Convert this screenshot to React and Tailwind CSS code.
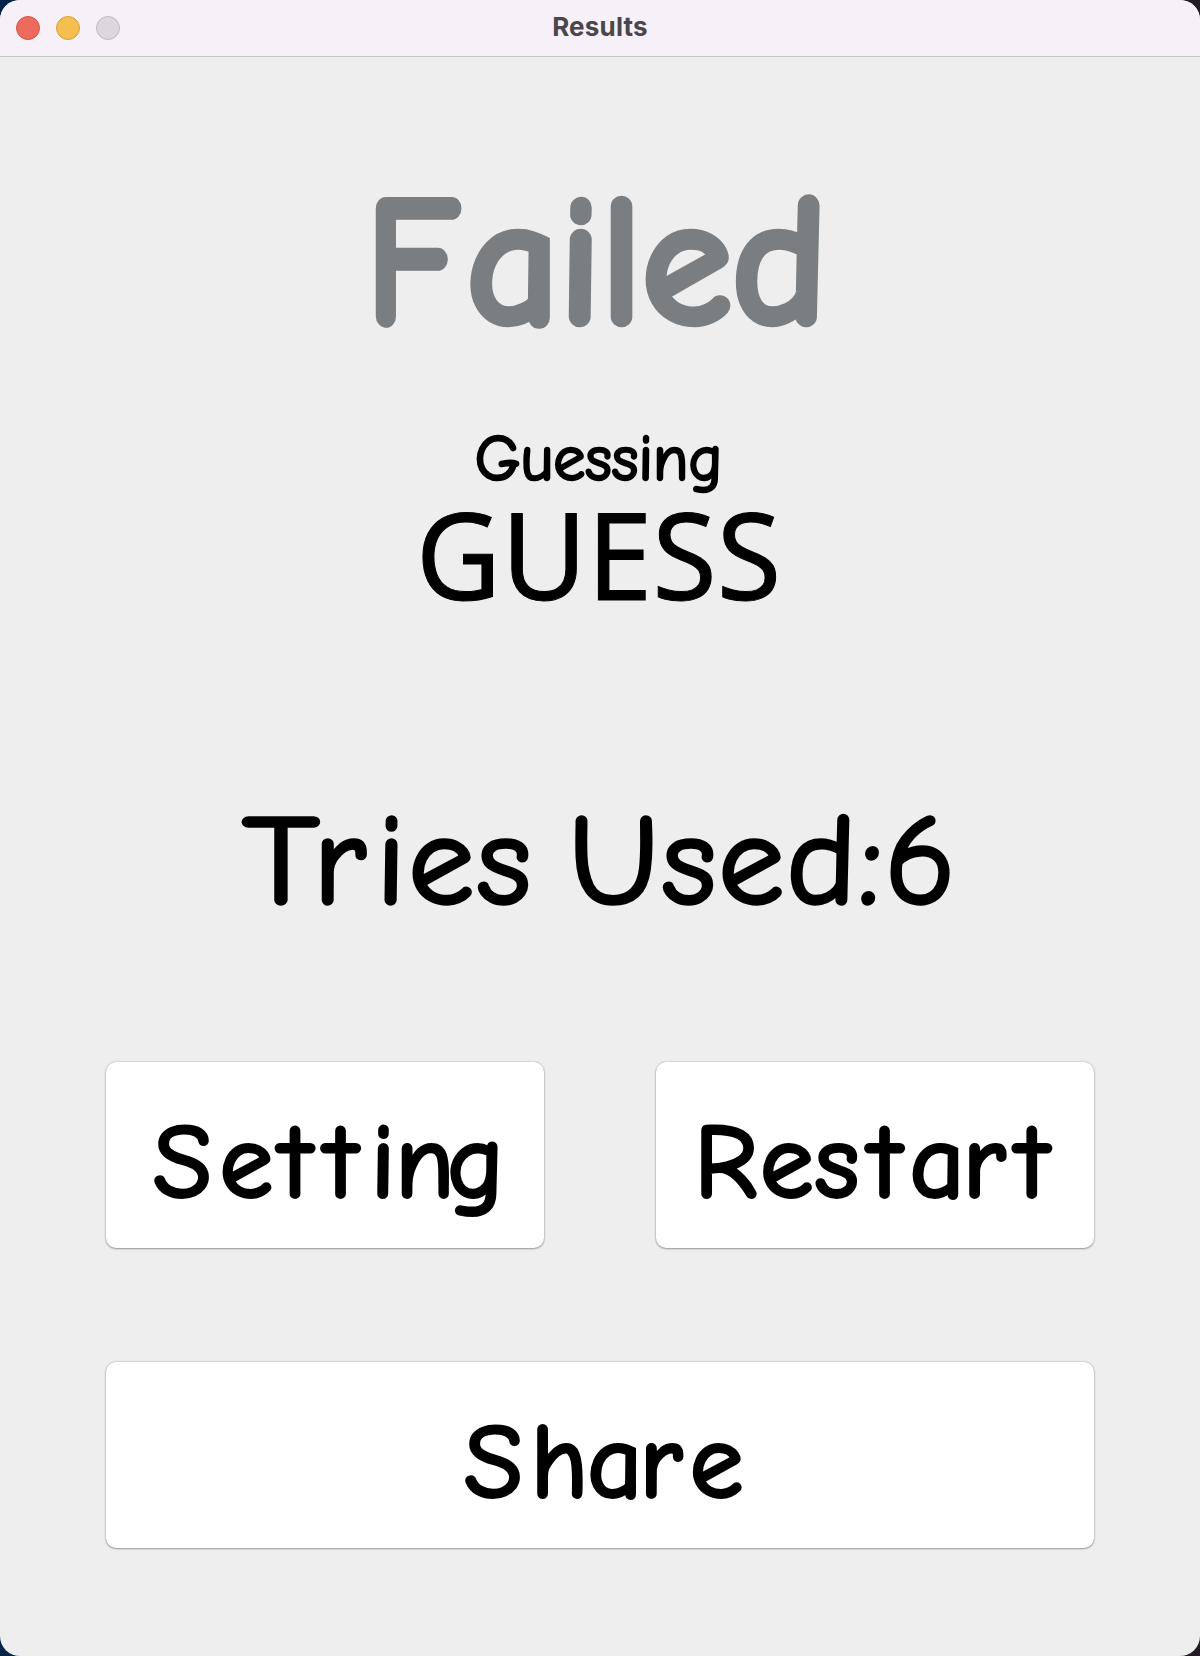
const comic = "font-['Comic_Sans_MS','Comic_Neue',cursive] whitespace-nowrap";

const settingLabel = [
  ['S', 'tracking-[7.7px]'],
  ['e', 'tracking-[7.7px]'],
  ['t', 'tracking-[15px]'],
  ['t', 'tracking-[14px]'],
  ['i', 'tracking-[0.5px]'],
  ['n', 'tracking-[-6.5px]'],
  ['g', 'tracking-normal'],
];
const restartLabel = [
  ['R', 'tracking-[2.5px]'],
  ['e', 'tracking-[1.5px]'],
  ['s', 'tracking-[11px]'],
  ['t', 'tracking-[9px]'],
  ['a', 'tracking-[-1.5px]'],
  ['r', 'tracking-[12px]'],
  ['t', 'tracking-normal'],
];
const shareLabel = [
  ['S', 'tracking-[8px]'],
  ['h', 'tracking-[-0.5px]'],
  ['a', 'tracking-[-2.5px]'],
  ['r', 'tracking-[8px]'],
  ['e', 'tracking-normal'],
];

function TitleBar() {
  return (
    <header className="flex h-[57px] shrink-0 items-center border-b border-[#c9c5c9] bg-[#f6f1f8] px-4">
      <div className="flex w-[120px] gap-4">
        <span className="size-6 rounded-full border border-[#d9544b] bg-[#ec6a5e]" />
        <span className="size-6 rounded-full border border-[#d6a243] bg-[#f4bf4f]" />
        <span className="size-6 rounded-full border border-[#bfbabf] bg-[#dcd7de]" />
      </div>
      <h1 className="flex-1 pb-1 text-center font-['Inter',sans-serif] text-[26px] font-bold tracking-[0.2px] text-[#4a474b]">Results</h1>
      <div className="w-[120px]" />
    </header>
  );
}

function Button({ label, className }) {
  return (
    <button className="flex h-[186px] flex-1 items-center justify-center rounded-[10px] bg-white pt-[14px] shadow-[0_0_2px_rgba(0,0,0,0.3),0_1px_2px_rgba(0,0,0,0.3)]">
      <span className={`${comic} ${className} scale-x-[1.02] text-[104px] leading-[172px] [-webkit-text-stroke:4px_#000]`}>
        {label.map(([letter, tracking], i) => (
          <span key={i} className={tracking}>{letter}</span>
        ))}
      </span>
    </button>
  );
}

export default function App() {
  return (
    <div className="h-[1656px] w-[1200px] bg-[linear-gradient(90deg,#062447_50%,#241c25_50%)]">
      <main className="flex h-full flex-col overflow-hidden rounded-[20px] bg-[#eee] text-black">
        <TitleBar />
        <section className="flex flex-col items-center">
          <h2 className={`${comic} mt-[107px] h-[200px] text-[176px] leading-[200px] tracking-[2px] text-[#7a7e80] [-webkit-text-stroke:10.5px_#7a7e80]`}>
            <span className="-ml-1 -mr-1 inline-block origin-left scale-x-[0.88] [-webkit-text-stroke:11.5px_#7a7e80]">F</span>ailed
          </h2>
          <p className={`${comic} mt-[55px] h-[80px] pr-[3px] text-[64px] leading-[80px] [-webkit-text-stroke:2.5px_#000]`}>Guessing</p>
          <p className="-mt-[6px] h-[120px] scale-x-[0.97] pr-[3px] font-['Noto_Sans',sans-serif] text-[121px] leading-[120px] [-webkit-text-stroke:1px_#000]">GUESS</p>
          <p className={`${comic} mt-[169px] h-[160px] scale-x-[1.04] text-[127px] leading-[160px] tracking-[2px] [word-spacing:-11px] [-webkit-text-stroke:3.5px_#000]`}>
            <span className="inline-block origin-left scale-x-[1.12]">T</span>
            <span className="tracking-[10px]">r</span>ies Used:6
          </p>
        </section>
        <section className="mt-[120px] flex flex-col gap-[114px] px-[106px]">
          <div className="flex gap-[112px]">
            <Button label={settingLabel} className="pl-[7.6px]" />
            <Button label={restartLabel} className="pr-[7px]" />
          </div>
          <div className="flex">
            <Button label={shareLabel} className="pl-2" />
          </div>
        </section>
      </main>
    </div>
  );
}
